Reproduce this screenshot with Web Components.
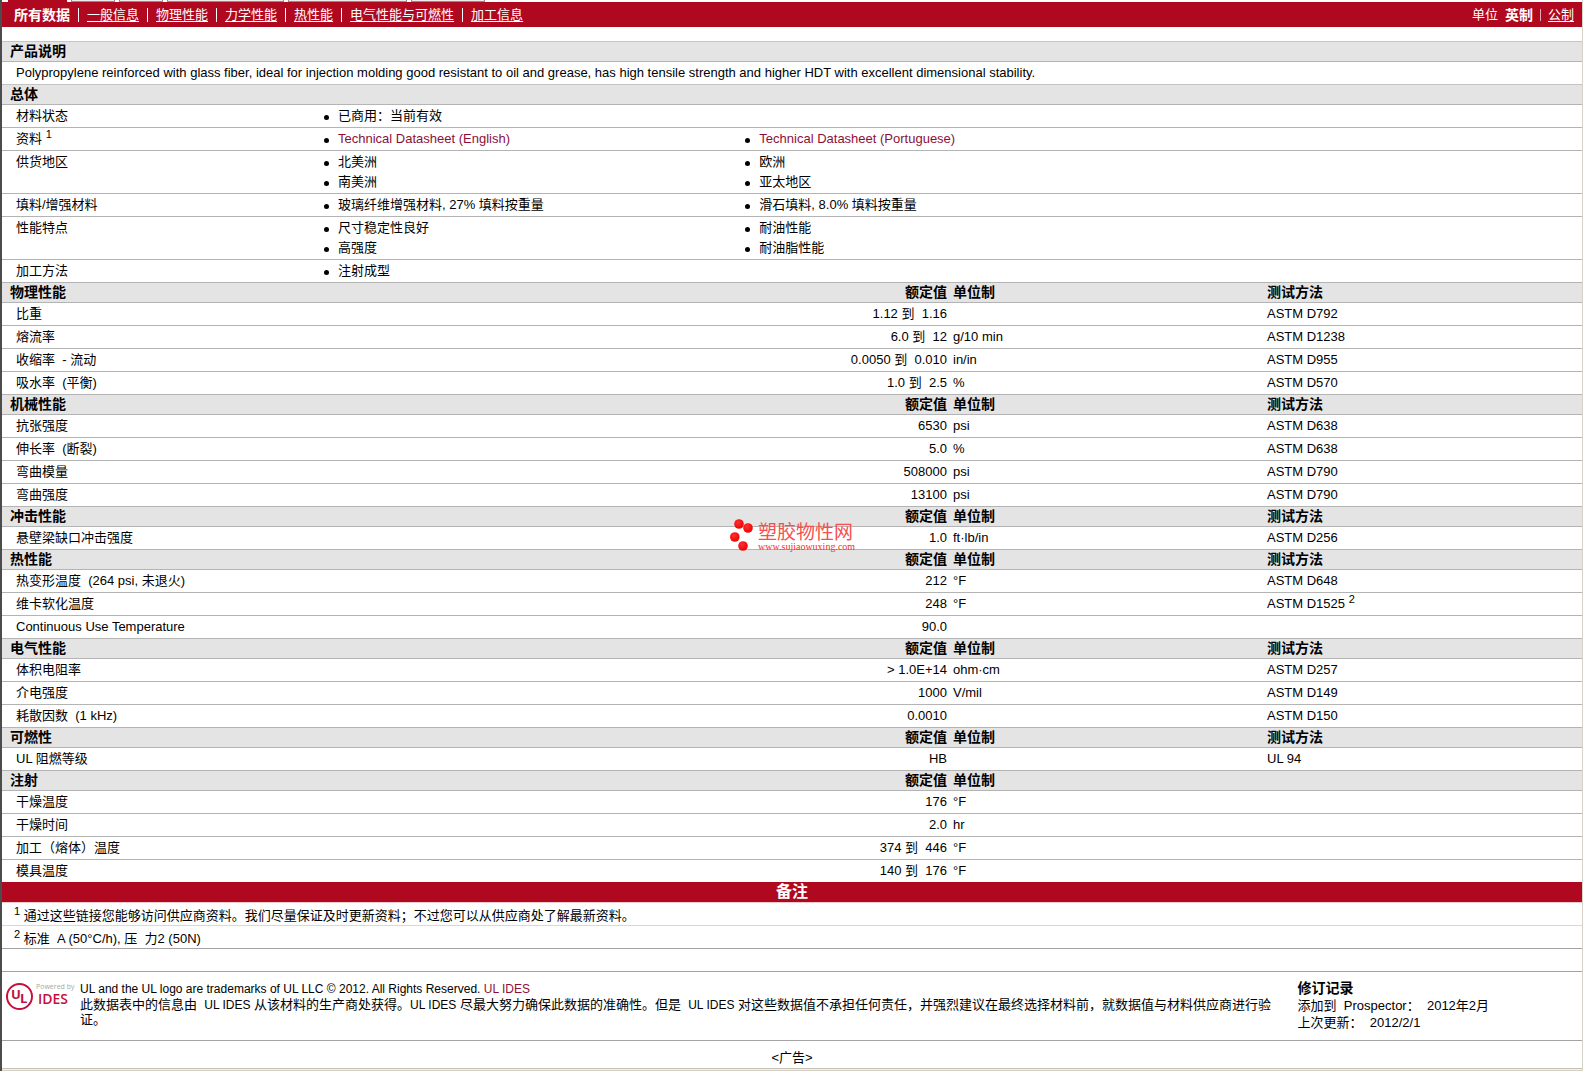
<!DOCTYPE html>
<html lang="zh-CN">
<head>
<meta charset="utf-8">
<title>Polypropylene 数据表</title>
<style>
    body {
        margin: 0;
        background: #fff;
        color: #000;
        font: 13px/20px "Liberation Sans", "Noto Sans CJK SC", sans-serif;
    }
    sheet-notes sup { font-size: 11px; line-height: 0; vertical-align: 5px; }
    sheet-footer a { color: #8c0f3a; text-decoration: none; }
    sheet-footer small { font-size: 12px; line-height: 0; }
    sheet-footer .legal { font-size: 12px; }
</style>
</head>
<body>
<data-sheet>
    <sheet-nav slot="nav">
        <b>所有数据</b>
        <a href="#general">一般信息</a>
        <a href="#physical">物理性能</a>
        <a href="#mechanical">力学性能</a>
        <a href="#thermal">热性能</a>
        <a href="#electrical">电气性能与可燃性</a>
        <a href="#processing">加工信息</a>
        <span slot="units">单位</span>
        <b slot="units">英制</b>
        <a slot="metric" href="#metric">公制</a>
    </sheet-nav>

    <sheet-text heading="产品说明">Polypropylene reinforced with glass fiber, ideal for injection molding good resistant to oil and grease, has high tensile strength and higher HDT with excellent dimensional stability.</sheet-text>
    <general-info id="general"></general-info>

    <property-table id="physical" heading="物理性能"></property-table>
    <property-table id="mechanical" heading="机械性能"></property-table>
    <property-table id="impact" heading="冲击性能"></property-table>
    <property-table id="thermal" heading="热性能"></property-table>
    <property-table id="electrical" heading="电气性能"></property-table>
    <property-table id="flammability" heading="可燃性"></property-table>
    <property-table id="processing" heading="注射" no-method></property-table>

    <sheet-notes heading="备注">
        <p><sup>1</sup> 通过这些链接您能够访问供应商资料。我们尽量保证及时更新资料；不过您可以从供应商处了解最新资料。</p>
        <p><sup>2</sup> 标准&nbsp; A (50°C/h), 压&nbsp; 力2 (50N)</p>
    </sheet-notes>

    <sheet-footer>
        <ul-logo slot="logo"></ul-logo>
        <div class="legal">UL and the UL logo are trademarks of UL LLC © 2012. All Rights Reserved. <a href="#ides">UL IDES</a></div>
        <div>此数据表中的信息由&nbsp; <small>UL IDES</small> 从该材料的生产商处获得。<small>UL IDES</small> 尽最大努力确保此数据的准确性。但是&nbsp; <small>UL IDES</small> 对这些数据值不承担任何责任，并强烈建议在最终选择材料前，就数据值与材料供应商进行验证。</div>
        <b slot="history">修订记录</b>
        <div slot="history">添加到&nbsp; Prospector：&nbsp; 2012年2月</div>
        <div slot="history">上次更新：&nbsp; 2012/2/1</div>
    </sheet-footer>

    <div slot="ad">&lt;广告&gt;</div>
    <site-watermark slot="watermark"></site-watermark>
</data-sheet>

<script>
const GENERAL = [
    ['材料状态', ['已商用：当前有效']],
    ['资料 <sup>1</sup>', ['<a href="#en">Technical Datasheet (English)</a>', '<a href="#pt">Technical Datasheet (Portuguese)</a>']],
    ['供货地区', ['北美洲', '欧洲', '南美洲', '亚太地区']],
    ['填料/增强材料', ['玻璃纤维增强材料, 27% 填料按重量', '滑石填料, 8.0% 填料按重量']],
    ['性能特点', ['尺寸稳定性良好', '耐油性能', '高强度', '耐油脂性能']],
    ['加工方法', ['注射成型']]
];

// label, value, unit, test method
const PROPERTIES = {
    physical: [
        ['比重', '1.12 到&nbsp; 1.16', '', 'ASTM D792'],
        ['熔流率', '6.0 到&nbsp; 12', 'g/10 min', 'ASTM D1238'],
        ['收缩率&nbsp; - 流动', '0.0050 到&nbsp; 0.010', 'in/in', 'ASTM D955'],
        ['吸水率&nbsp; (平衡)', '1.0 到&nbsp; 2.5', '%', 'ASTM D570']
    ],
    mechanical: [
        ['抗张强度', '6530', 'psi', 'ASTM D638'],
        ['伸长率&nbsp; (断裂)', '5.0', '%', 'ASTM D638'],
        ['弯曲模量', '508000', 'psi', 'ASTM D790'],
        ['弯曲强度', '13100', 'psi', 'ASTM D790']
    ],
    impact: [
        ['悬壁梁缺口冲击强度', '1.0', 'ft·lb/in', 'ASTM D256']
    ],
    thermal: [
        ['热变形温度&nbsp; (264 psi, 未退火)', '212', '°F', 'ASTM D648'],
        ['维卡软化温度', '248', '°F', 'ASTM D1525 <sup>2</sup>'],
        ['Continuous Use Temperature', '90.0', '', '']
    ],
    electrical: [
        ['体积电阻率', '&gt; 1.0E+14', 'ohm·cm', 'ASTM D257'],
        ['介电强度', '1000', 'V/mil', 'ASTM D149'],
        ['耗散因数&nbsp; (1 kHz)', '0.0010', '', 'ASTM D150']
    ],
    flammability: [
        ['UL 阻燃等级', 'HB', '', 'UL 94']
    ],
    processing: [
        ['干燥温度', '176', '°F', ''],
        ['干燥时间', '2.0', 'hr', ''],
        ['加工（熔体）温度', '374 到&nbsp; 446', '°F', ''],
        ['模具温度', '140 到&nbsp; 176', '°F', '']
    ]
};

// shared by every section that has a grey title bar
const SECTION_STYLE = `
    :host { display: block; }
    h2, th {
        margin: 0;
        padding: 0;
        background: #e4e4e4;
        border-bottom: 1px solid #b4b4b4;
        font-size: 14px;
        line-height: 19px;
        font-weight: bold;
        text-align: left;
    }
    h2, th:first-child { padding-left: 8px; }
    sup { font-size: 11px; line-height: 0; vertical-align: 5px; }
    a { color: #8c0f3a; text-decoration: none; }
`;

class DataSheet extends HTMLElement {
    constructor() {
        super();
        this.attachShadow({ mode: 'open' });
    }

    connectedCallback() {
        this.shadowRoot.innerHTML = `
            <style>
                :host {
                    display: block;
                    position: relative;
                    border-left: 2px solid #4c4c4c;
                    border-right: 1px solid #d6d2c8;
                }
                .ad {
                    padding: 9px 0 2px;
                    text-align: center;
                    line-height: 16px;
                }
                .edge {
                    height: 1px;
                    background: #f4f2ea;
                    border-top: 1px solid #c4c0b4;
                    border-bottom: 1px solid #d4d0c4;
                }
            </style>
            <slot name="nav"></slot>
            <slot></slot>
            <div class="ad"><slot name="ad"></slot></div>
            <div class="edge"></div>
            <slot name="watermark"></slot>
        `;
    }
}

class SheetNav extends HTMLElement {
    constructor() {
        super();
        this.attachShadow({ mode: 'open' });
    }

    connectedCallback() {
        this.shadowRoot.innerHTML = `
            <style>
                :host { display: block; padding-bottom: 14px; border-bottom: 1px solid #c4c4c4; }
                .tabs {
                    display: flex;
                    gap: 4px;
                    height: 2px;
                    padding-left: 6px;
                }
                .tabs i { background: #ececec; border: 1px solid #8c8c8c; border-top: 0; box-sizing: border-box; }
                .tabs i:first-child { background: #b0081e; border: 0; }
                .bar {
                    display: flex;
                    justify-content: space-between;
                    background: #b0081e;
                    color: #fff;
                    padding: 3px 8px 2px 12px;
                }
                nav, .units { display: flex; align-items: center; }
                .units { gap: 7px; }
                .units i { width: 1px; height: 12px; background: #e9a9b3; }
                ::slotted(a) { color: #fff; text-underline-offset: 2px; }
                ::slotted(b) { font-size: 14px; }
                nav ::slotted(a) { margin-left: 8px; }
                .item { display: flex; align-items: center; }
                .item + .item::before {
                    content: "";
                    width: 1px;
                    height: 14px;
                    margin-left: 8px;
                    background: #fff;
                }
            </style>
            <div class="tabs">
                <i style="width:59px"></i><i style="width:44px"></i><i style="width:44px"></i><i style="width:117px"></i><i style="width:119px"></i><i style="width:74px"></i>
            </div>
            <div class="bar">
                <nav></nav>
                <div class="units"><slot name="units"></slot><i></i><slot name="metric"></slot></div>
            </div>
        `;

        // one slot per link, so that a divider can stand between them
        const nav = this.shadowRoot.querySelector('nav');
        this.querySelectorAll(':scope > :not([slot])').forEach((link, i) => {
            link.slot = `link-${i}`;
            nav.insertAdjacentHTML('beforeend', `<span class="item"><slot name="link-${i}"></slot></span>`);
        });
    }
}

class SheetText extends HTMLElement {
    constructor() {
        super();
        this.attachShadow({ mode: 'open' });
    }

    connectedCallback() {
        this.shadowRoot.innerHTML = `
            <style>
                ${SECTION_STYLE}
                p { margin: 0; padding: 1px 14px; border-bottom: 1px solid #c4c4c4; }
            </style>
            <h2>${this.getAttribute('heading')}</h2>
            <p><slot></slot></p>
        `;
    }
}

class GeneralInfo extends HTMLElement {
    constructor() {
        super();
        this.attachShadow({ mode: 'open' });
    }

    connectedCallback() {
        const rows = GENERAL.map(([label, items]) => `
            <div class="row">
                <dt>${label}</dt>
                <dd><ul>${items.map(item => `<li>${item}</li>`).join('')}</ul></dd>
            </div>`).join('');

        this.shadowRoot.innerHTML = `
            <style>
                ${SECTION_STYLE}
                dl, dd, ul { margin: 0; padding: 0; }
                .row {
                    display: grid;
                    grid-template-columns: 20% 80%;
                    padding: 1px 0;
                    border-bottom: 1px solid #b4b4b4;
                }
                dt { padding-left: 14px; }
                /* two items to a line, the last third stays empty */
                ul { display: grid; grid-template-columns: 1fr 1fr; width: 66.67%; list-style: none; }
                li { display: flex; align-items: center; }
                li::before {
                    content: "";
                    width: 5px;
                    height: 5px;
                    margin: 2px 9px 0 6px;
                    border-radius: 50%;
                    background: #000;
                }
            </style>
            <h2>总体</h2>
            <dl>${rows}</dl>
        `;
    }
}

class PropertyTable extends HTMLElement {
    constructor() {
        super();
        this.attachShadow({ mode: 'open' });
    }

    connectedCallback() {
        const method = this.hasAttribute('no-method') ? '' : '测试方法';
        const rows = PROPERTIES[this.id].map(cells =>
            `<tr>${cells.map(cell => `<td>${cell}</td>`).join('')}</tr>`).join('');

        this.shadowRoot.innerHTML = `
            <style>
                ${SECTION_STYLE}
                table { width: 100%; table-layout: fixed; border-collapse: separate; border-spacing: 0; }
                col { width: 20%; }
                col:first-child { width: 40%; }
                td { padding: 1px 0; border-bottom: 1px solid #b4b4b4; }
                td:first-child { padding-left: 14px; }
                th:nth-child(2), td:nth-child(2) { text-align: right; padding-right: 3px; }
                th:nth-child(3), td:nth-child(3) { padding-left: 3px; }
                th:nth-child(4), td:nth-child(4) { padding-left: 1px; }
                :host([no-method]) tr:last-child td { border-bottom: 0; }
            </style>
            <table>
                <colgroup><col><col><col><col></colgroup>
                <thead><tr><th>${this.getAttribute('heading')}</th><th>额定值</th><th>单位制</th><th>${method}</th></tr></thead>
                <tbody>${rows}</tbody>
            </table>
        `;
    }
}

class SheetNotes extends HTMLElement {
    constructor() {
        super();
        this.attachShadow({ mode: 'open' });
    }

    connectedCallback() {
        this.shadowRoot.innerHTML = `
            <style>
                :host { display: block; padding-bottom: 22px; border-bottom: 1px solid #a4a4a4; }
                h2 {
                    margin: 0;
                    background: #b0081e;
                    border-bottom: 1px solid #f3c9cd;
                    color: #fff;
                    font-size: 16px;
                    line-height: 20px;
                    text-align: center;
                }
                ::slotted(p) { margin: 0; padding: 4px 12px 0; line-height: 18px; border-bottom: 1px solid #d8d8d8; }
                ::slotted(p:last-child) { border-bottom-color: #a4a4a4; }
            </style>
            <h2>${this.getAttribute('heading')}</h2>
            <slot></slot>
        `;
    }
}

class SheetFooter extends HTMLElement {
    constructor() {
        super();
        this.attachShadow({ mode: 'open' });
    }

    connectedCallback() {
        this.shadowRoot.innerHTML = `
            <style>
                :host {
                    display: grid;
                    grid-template-columns: 78px 1fr 18%;
                    padding: 8px 0;
                    border-bottom: 1px solid #a4a4a4;
                }
                .text { line-height: 15px; padding: 2px 20px 5px 0; }
                .history { line-height: 17px; }
                ::slotted(b) { font-size: 14px; }
            </style>
            <slot name="logo"></slot>
            <div class="text"><slot></slot></div>
            <div class="history"><slot name="history"></slot></div>
        `;
    }
}

class UlLogo extends HTMLElement {
    constructor() {
        super();
        this.attachShadow({ mode: 'open' });
    }

    connectedCallback() {
        this.shadowRoot.innerHTML = `
            <style>
                :host { display: block; }
                svg { display: block; }
            </style>
            <svg width="74" height="34" viewBox="0 0 74 34" fill="#c4103c">
                <circle cx="17.5" cy="16.5" r="12.5" fill="none" stroke="#c4103c" stroke-width="2"/>
                <g font-family="Liberation Sans Narrow, Open Sans" font-weight="bold" font-size="13">
                    <text x="9" y="19">U</text>
                    <text x="18" y="23">L</text>
                </g>
                <text x="34" y="9" font-family="Open Sans" font-size="7" fill="#a8a8a8">Powered by</text>
                <text x="36" y="24" font-family="Open Sans" font-weight="600" font-size="14">IDES</text>
            </svg>
        `;
    }
}

class SiteWatermark extends HTMLElement {
    constructor() {
        super();
        this.attachShadow({ mode: 'open' });
    }

    connectedCallback() {
        this.shadowRoot.innerHTML = `
            <style>
                :host {
                    position: absolute;
                    top: 50%;
                    left: 50%;
                    transform: translate(-50%, -50%);
                    pointer-events: none;
                }
                svg { display: block; }
            </style>
            <svg width="128" height="38" viewBox="-2 0 128 38">
                <defs>
                    <radialGradient id="dot" cx="40%" cy="35%">
                        <stop offset="0" stop-color="#ff3030"/>
                        <stop offset="1" stop-color="#f00c0c"/>
                    </radialGradient>
                </defs>
                <g fill="url(#dot)">
                    <circle cx="9" cy="7" r="4.8"/>
                    <circle cx="18" cy="11" r="4.8"/>
                    <circle cx="4.8" cy="20" r="4.8"/>
                    <circle cx="13" cy="29" r="4.8"/>
                </g>
                <text x="28" y="22" font-family="Noto Sans CJK SC" font-size="19" fill="#f45050">塑胶物性网</text>
                <text x="28" y="33" font-family="Liberation Serif" font-size="10" fill="#f03030">www.sujiaowuxing.com</text>
            </svg>
        `;
    }
}

customElements.define('data-sheet', DataSheet);
customElements.define('sheet-nav', SheetNav);
customElements.define('sheet-text', SheetText);
customElements.define('general-info', GeneralInfo);
customElements.define('property-table', PropertyTable);
customElements.define('sheet-notes', SheetNotes);
customElements.define('sheet-footer', SheetFooter);
customElements.define('ul-logo', UlLogo);
customElements.define('site-watermark', SiteWatermark);
</script>
</body>
</html>
